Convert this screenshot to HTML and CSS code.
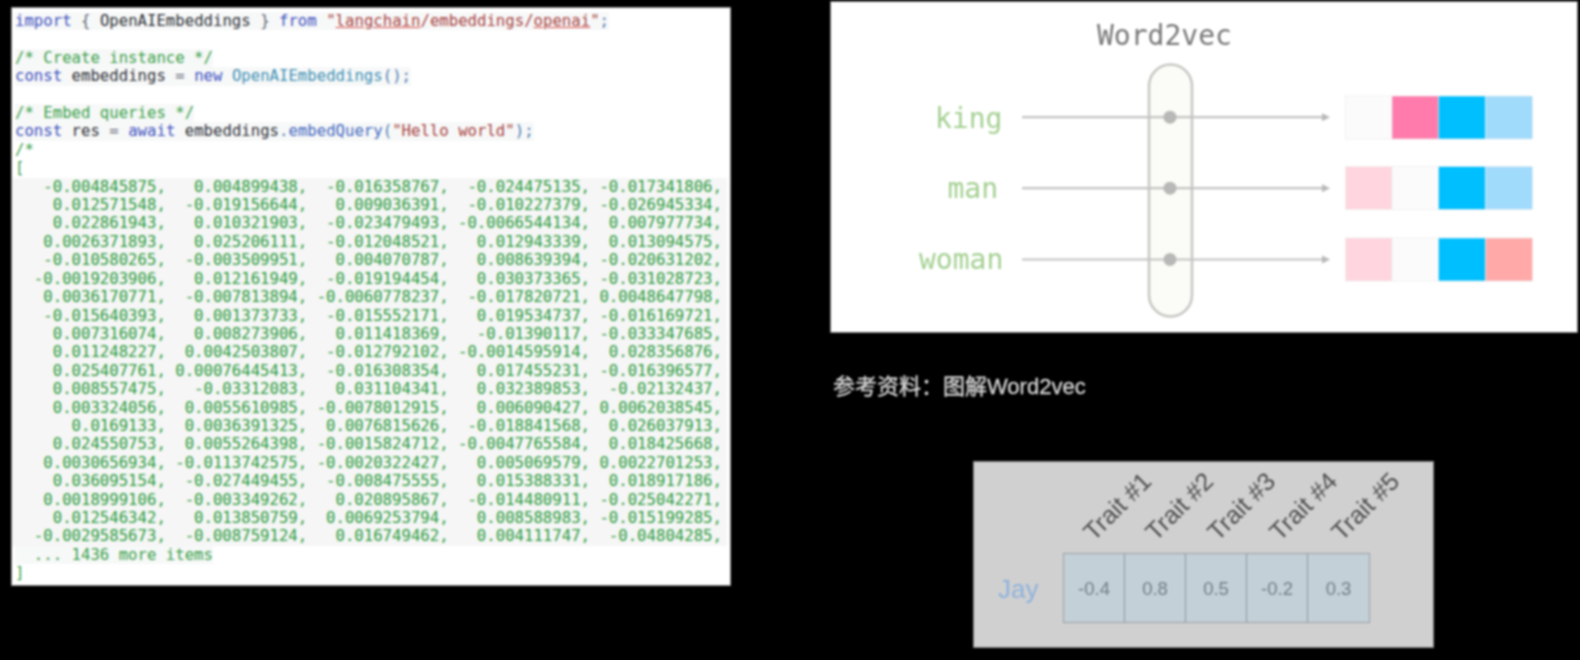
FILE: index.html
```html
<!DOCTYPE html>
<html lang="en">
<head>
<meta charset="utf-8">
<title>Embeddings</title>
<link rel="stylesheet" href="styles.css">
</head>
<body>
<main class="slide">
  <section class="code">
    <div class="line hl"><span class="kw">import</span> <span class="pn">{</span> <span class="id">OpenAIEmbeddings</span> <span class="pn">}</span> <span class="kw">from</span> <span class="str">"<u>langchain</u>/embeddings/<u>openai</u>"</span><span class="semi">;</span></div>
    <div class="line">&nbsp;</div>
    <div class="line hl"><span class="cm">/* Create instance */</span></div>
    <div class="line hl"><span class="kw">const</span> <span class="id">embeddings</span> <span class="pn">=</span> <span class="kw">new</span> <span class="cls">OpenAIEmbeddings</span><span class="semi">();</span></div>
    <div class="line">&nbsp;</div>
    <div class="line hl"><span class="cm">/* Embed queries */</span></div>
    <div class="line hl"><span class="kw">const</span> <span class="id">res</span> <span class="pn">=</span> <span class="kw">await</span> <span class="id">embeddings</span><span class="semi">.</span><span class="fn">embedQuery</span><span class="semi">(</span><span class="str">"Hello world"</span><span class="semi">);</span></div>
    <div class="line"><span class="cm">/*</span></div>
    <div class="line"><span class="cm">[</span></div>
    <div class="rows">
      <div class="line">   -0.004845875,   0.004899438,  -0.016358767,  -0.024475135, -0.017341806,</div>
      <div class="line">    0.012571548,  -0.019156644,   0.009036391,  -0.010227379, -0.026945334,</div>
      <div class="line">    0.022861943,   0.010321903,  -0.023479493, -0.0066544134,  0.007977734,</div>
      <div class="line">   0.0026371893,   0.025206111,  -0.012048521,   0.012943339,  0.013094575,</div>
      <div class="line">   -0.010580265,  -0.003509951,   0.004070787,   0.008639394, -0.020631202,</div>
      <div class="line">  -0.0019203906,   0.012161949,  -0.019194454,   0.030373365, -0.031028723,</div>
      <div class="line">   0.0036170771,  -0.007813894, -0.0060778237,  -0.017820721, 0.0048647798,</div>
      <div class="line">   -0.015640393,   0.001373733,  -0.015552171,   0.019534737, -0.016169721,</div>
      <div class="line">    0.007316074,   0.008273906,   0.011418369,   -0.01390117, -0.033347685,</div>
      <div class="line">    0.011248227,  0.0042503807,  -0.012792102, -0.0014595914,  0.028356876,</div>
      <div class="line">    0.025407761, 0.00076445413,  -0.016308354,   0.017455231, -0.016396577,</div>
      <div class="line">    0.008557475,   -0.03312083,   0.031104341,   0.032389853,  -0.02132437,</div>
      <div class="line">    0.003324056,  0.0055610985, -0.0078012915,   0.006090427, 0.0062038545,</div>
      <div class="line">      0.0169133,  0.0036391325,  0.0076815626,  -0.018841568,  0.026037913,</div>
      <div class="line">    0.024550753,  0.0055264398, -0.0015824712, -0.0047765584,  0.018425668,</div>
      <div class="line">   0.0030656934, -0.0113742575, -0.0020322427,   0.005069579, 0.0022701253,</div>
      <div class="line">    0.036095154,  -0.027449455,  -0.008475555,   0.015388331,  0.018917186,</div>
      <div class="line">   0.0018999106,  -0.003349262,   0.020895867,  -0.014480911, -0.025042271,</div>
      <div class="line">    0.012546342,   0.013850759,  0.0069253794,   0.008588983, -0.015199285,</div>
      <div class="line">  -0.0029585673,  -0.008759124,   0.016749462,   0.004111747,  -0.04804285,</div>
    </div>
    <div class="line hl"><span class="cm">  ... 1436 more items</span></div>
    <div class="line"><span class="cm">]</span></div>
  </section>

  <div class="side">
    <section class="w2v">
      <svg class="w2v-svg" width="746" height="330" viewBox="831 1.5 746 330" xmlns="http://www.w3.org/2000/svg">
        <text class="w2v-title" x="1097" y="44">Word2vec</text>
        <text class="w2v-word" x="935" y="127">king</text>
        <text class="w2v-word" x="947.500" y="197.500">man</text>
        <text class="w2v-word" x="919" y="268.500">woman</text>
        <rect class="capsule" x="1149" y="64" width="43" height="252" rx="21.500"/>
        <g class="w2v-lines">
          <line x1="1022" y1="116.700" x2="1323" y2="116.700"/>
          <line x1="1022" y1="187.700" x2="1323" y2="187.700"/>
          <line x1="1022" y1="259" x2="1323" y2="259"/>
        </g>
        <g class="w2v-heads">
          <polygon points="1322,112.700 1330,116.700 1322,120.700"/>
          <polygon points="1322,183.700 1330,187.700 1322,191.700"/>
          <polygon points="1322,255 1330,259 1322,263"/>
          <circle cx="1170" cy="116.700" r="6.500"/>
          <circle cx="1170" cy="187.700" r="6.500"/>
          <circle cx="1170" cy="259" r="6.500"/>
        </g>
        <g class="cell-outline">
          <rect class="c-blank" x="1345.500" y="95.500" width="46.500" height="43"/>
          <rect class="c-pink" x="1392" y="95.500" width="46.500" height="43"/>
          <rect class="c-blue" x="1438.500" y="95.500" width="47" height="43"/>
          <rect class="c-sky" x="1485.500" y="95.500" width="47" height="43"/>
          <rect class="c-rose" x="1345.500" y="166" width="46.500" height="43"/>
          <rect class="c-blank" x="1392" y="166" width="46.500" height="43"/>
          <rect class="c-blue" x="1438.500" y="166" width="47" height="43"/>
          <rect class="c-sky" x="1485.500" y="166" width="47" height="43"/>
          <rect class="c-rose" x="1345.500" y="237.500" width="46.500" height="43"/>
          <rect class="c-blank" x="1392" y="237.500" width="46.500" height="43"/>
          <rect class="c-blue" x="1438.500" y="237.500" width="47" height="43"/>
          <rect class="c-salmon" x="1485.500" y="237.500" width="47" height="43"/>
        </g>
      </svg>
    </section>

    <p class="caption">参考资料：图解Word2vec</p>

    <section class="jay">
      <div class="traits">
        <span class="trait">Trait #1</span>
        <span class="trait">Trait #2</span>
        <span class="trait">Trait #3</span>
        <span class="trait">Trait #4</span>
        <span class="trait">Trait #5</span>
      </div>
      <div class="jay-row">
        <span class="jay-name">Jay</span>
        <div class="jay-cells">
          <span class="jay-cell">-0.4</span>
          <span class="jay-cell">0.8</span>
          <span class="jay-cell">0.5</span>
          <span class="jay-cell">-0.2</span>
          <span class="jay-cell">0.3</span>
        </div>
      </div>
    </section>
  </div>
</main>
</body>
</html>
```

FILE: styles.css
```css
html, body {
  margin: 0;
  height: 100%;
  background: #000;
  overflow: hidden;
}

.slide {
  display: flex;
  align-items: flex-start;
  width: 1580px;
  height: 660px;
  filter: blur(0.8px);
  font-family: "Liberation Sans", "Noto Sans CJK SC", sans-serif;
}

/* Code panel */
.code {
  box-sizing: border-box;
  width: 720px;
  height: 579px;
  margin: 7px 0 0 11px;
  padding: 4px 0 0 3px;
  background: #fff;
  border: 1px solid #8a8a8a;
  font-family: "DejaVu Sans Mono", monospace;
  font-size: 15.67px;
  line-height: 18.41px;
  color: #2c2c2c;
}

.line {
  height: 18.41px;
  white-space: pre;
}

.hl {
  width: fit-content;
  background: #f7f8f8;
}

.rows {
  margin: 0 3px 0 -3px;
  padding-left: 3px;
  background: #f5f6f5;
  color: #2f9c42;
}

.kw { color: #3f53c0; }
.pn { color: #626a73; }
.id { color: #2f3238; }
.str { color: #a84443; }
.str u { text-decoration-color: #d9534f; }
.semi { color: #4f7cb2; }
.cm { color: #3aa04a; }
.cls { color: #4290b4; }
.fn { color: #4468c0; }

/* Right column */
.side {
  display: flex;
  flex-direction: column;
  align-items: flex-start;
  margin: 1.5px 0 0 100px;
}

.w2v {
  background: #fff;
  outline: 1px solid #777;
  width: 746px;
  height: 330px;
}

.w2v-svg {
  display: block;
}

.w2v-title,
.w2v-word {
  font-family: "DejaVu Sans Mono", monospace;
  font-size: 28px;
}

.w2v-title { fill: #787878; }
.w2v-word { fill: #a4d092; }

.capsule {
  fill: #fbfbf7;
  stroke: #c6c6c3;
  stroke-width: 2.5;
}

.w2v-lines line {
  stroke: #c3c3c3;
  stroke-width: 2.2;
}

.w2v-heads { fill: #b8b8b8; }

.cell-outline rect {
  stroke: #ececec;
  stroke-width: 0.6;
}

.c-blank { fill: #fbfbfb; }
.c-pink { fill: #ff7bab; }
.c-blue { fill: #00bfff; }
.c-sky { fill: #a0dbfc; }
.c-rose { fill: #ffd6df; }
.c-salmon { fill: #ffa9a9; }

.caption {
  margin: 42px 0 0 2px;
  height: 26px;
  line-height: 26px;
  font-size: 22px;
  color: #d8d8d8;
  -webkit-text-stroke: 0.3px #d8d8d8;
}

/* Jay panel */
.jay {
  box-sizing: border-box;
  width: 459px;
  height: 185px;
  margin: 62.2px 0 0 143px;
  background: #d0d0d0;
  outline: 1px solid #808080;
  display: flex;
  flex-direction: column;
  justify-content: flex-end;
  padding: 0 0 23.5px 0;
}

.traits {
  display: flex;
  margin: 0 0 17px 108px;
}

.trait {
  width: 62px;
  white-space: nowrap;
  font-size: 25px;
  line-height: 25px;
  color: #4f4f4f;
  transform: rotate(-45deg);
  transform-origin: 18px 12px;
}

.jay-row {
  display: flex;
  align-items: center;
}

.jay-name {
  width: 89px;
  padding: 3px 0 0 24px;
  box-sizing: border-box;
  font-size: 26px;
  color: #8fb2dc;
}

.jay-cells {
  display: flex;
  height: 68.5px;
  border: 1px solid #9a9fa3;
}

.jay-cell {
  box-sizing: border-box;
  width: 61px;
  padding-top: 3px;
  display: flex;
  align-items: center;
  justify-content: center;
  background: #c3d0d7;
  border-right: 1px solid #8e989e;
  font-size: 18.5px;
  color: #747e87;
}

.jay-cell:last-child {
  border-right: 0;
}
```
